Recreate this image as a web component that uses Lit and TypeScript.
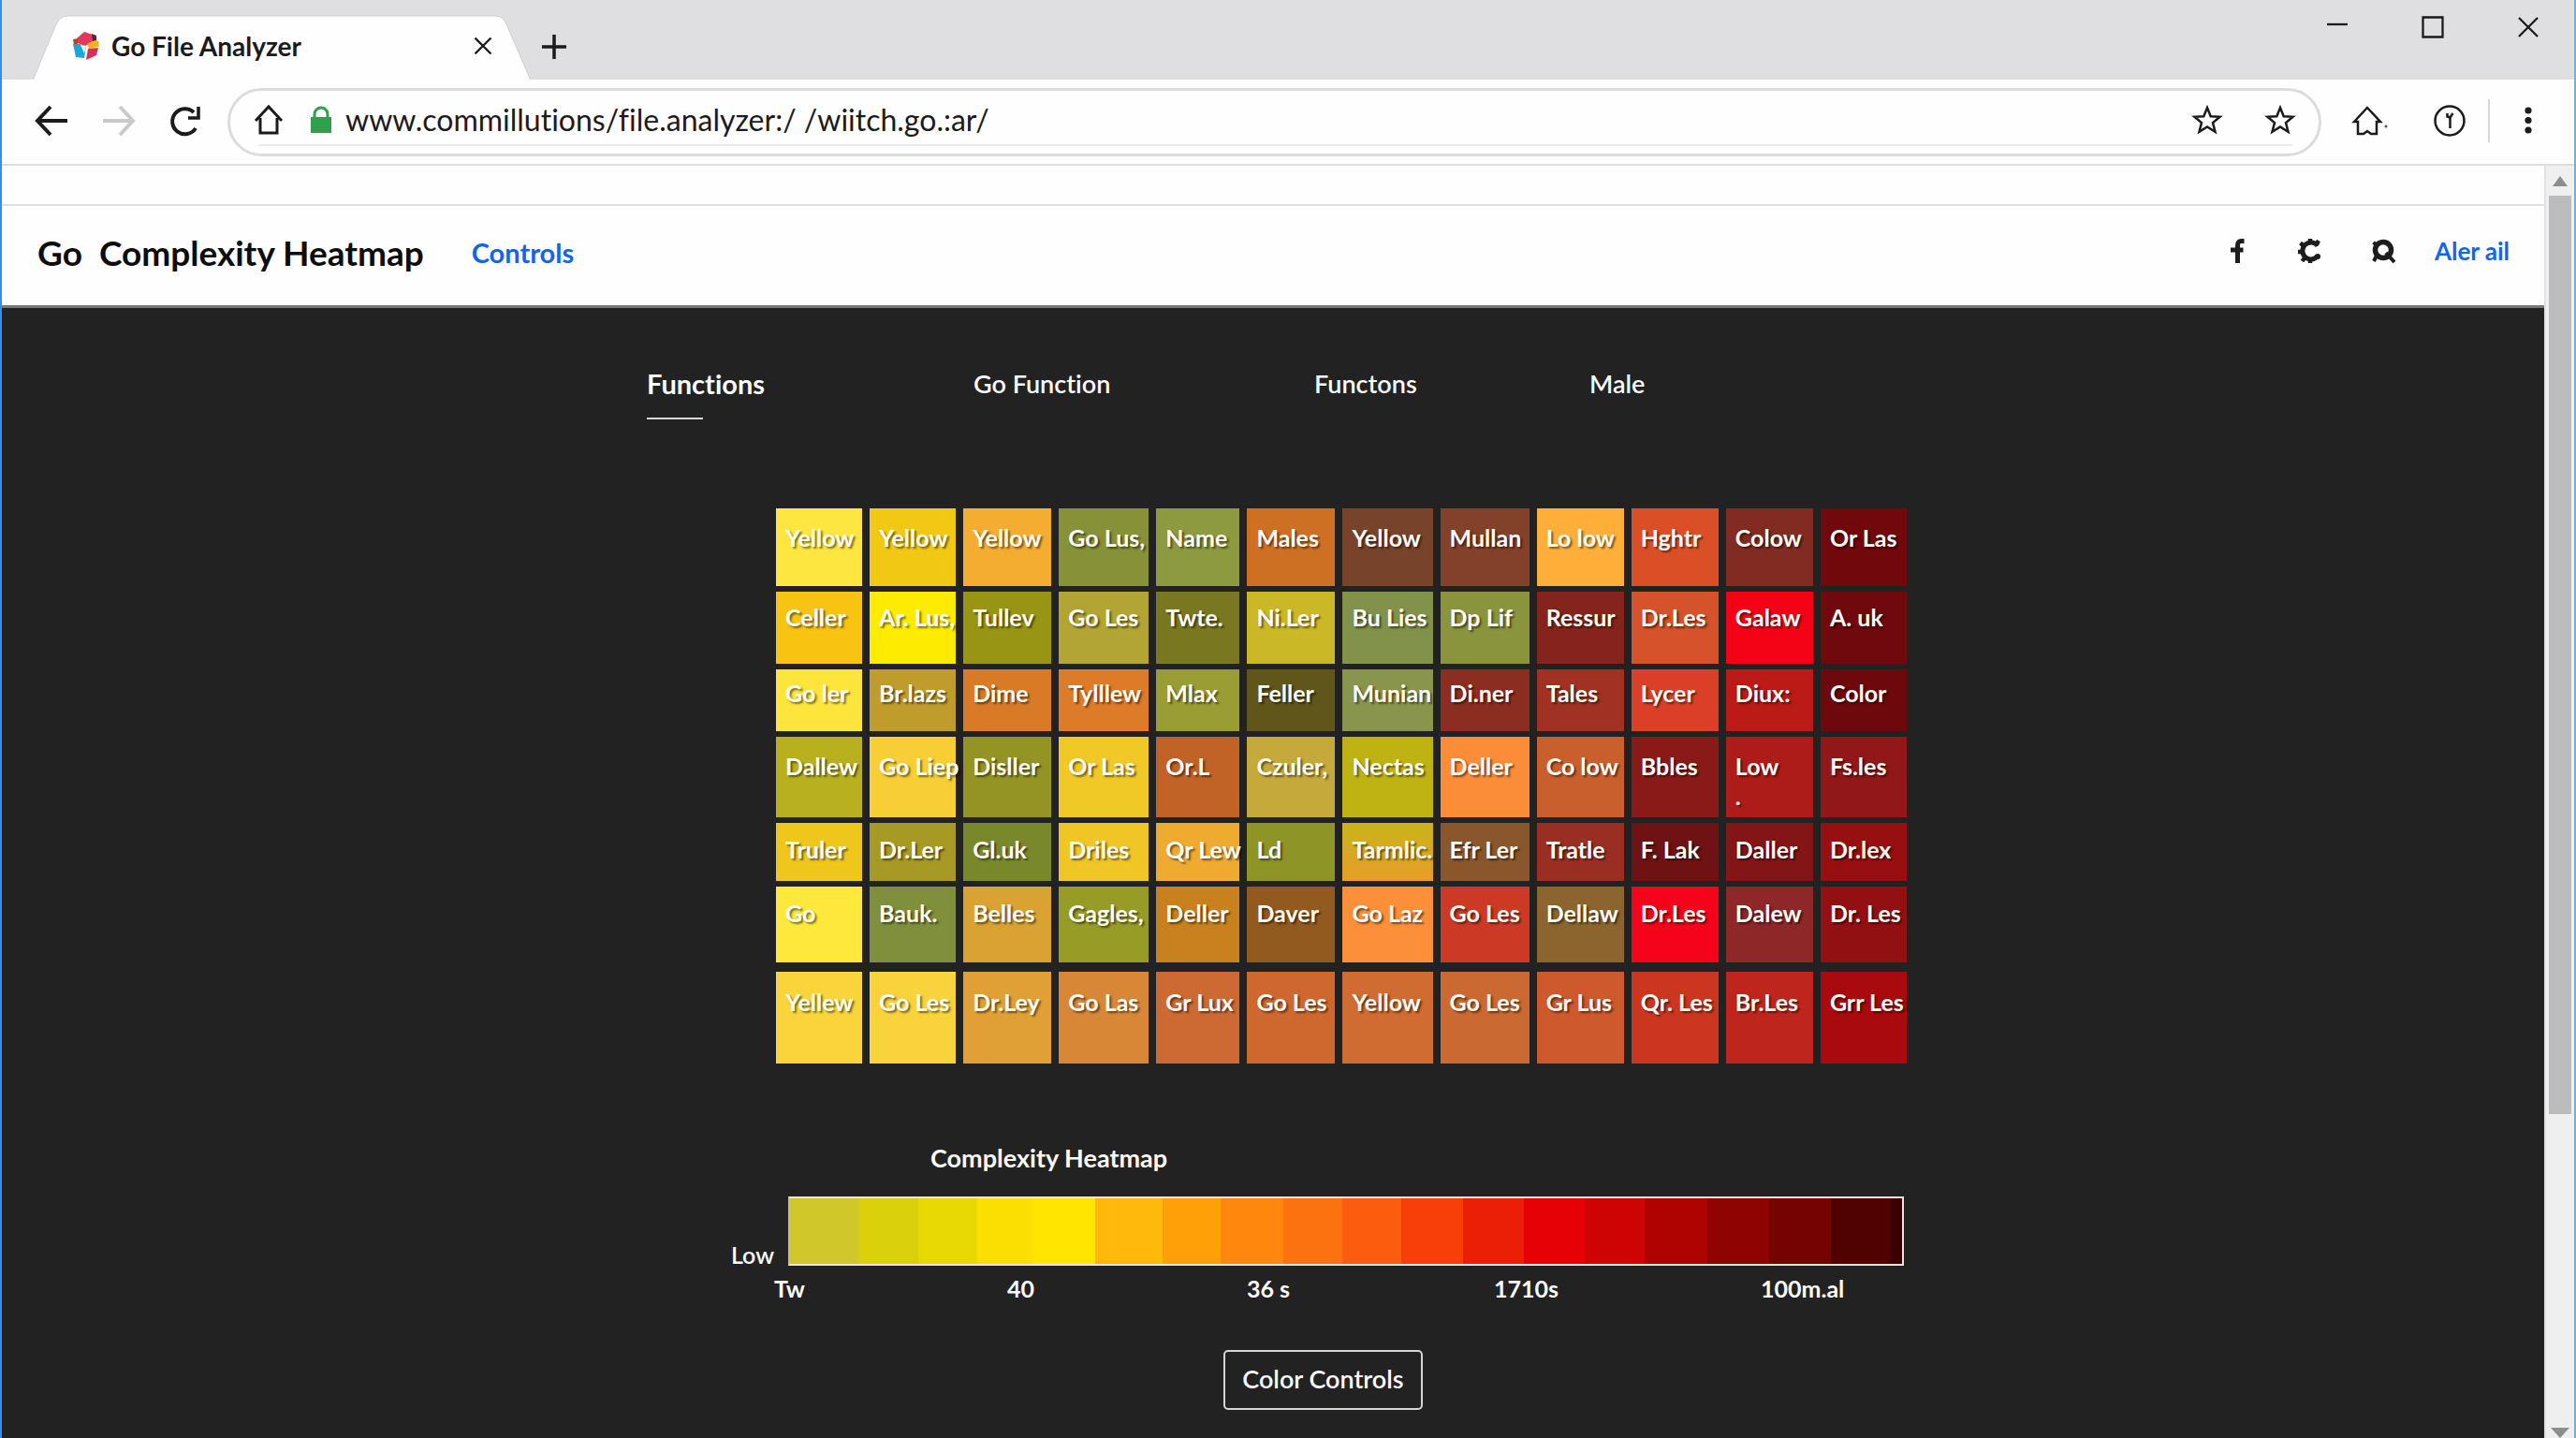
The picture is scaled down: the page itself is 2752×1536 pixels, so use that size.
import { LitElement, html, css, svg } from "lit";
import { customElement, property } from "lit/decorators.js";
import { styleMap } from "lit/directives/style-map.js";

type Cell = [label: string, color: string];
interface HeatRow {
  height: number;
  pad: number;
  cells: Cell[];
}

const HEAT_ROWS: HeatRow[] = [
  {
    height: 83,
    pad: 15,
    cells: [
      ["Yellow", "#fde63f"], ["Yellow", "#f1c914"], ["Yellow", "#f4ad31"], ["Go Lus,", "#879138"],
      ["Name", "#8e9a3f"], ["Males", "#ce7024"], ["Yellow", "#77432a"], ["Mullan", "#84412a"],
      ["Lo low", "#fdaf3a"], ["Hghtr", "#db4f27"], ["Colow", "#822b23"], ["Or Las", "#70080c"],
    ],
  },
  {
    height: 77,
    pad: 11,
    cells: [
      ["Celler", "#f7c412"], ["Ar. Lus,", "#fdec02"], ["Tullev", "#989414"], ["Go Les", "#b2a534"],
      ["Twte.", "#797720"], ["Ni.Ler", "#cab826"], ["Bu Lies", "#82924a"], ["Dp Lif", "#8a943c"],
      ["Ressur", "#84241c"], ["Dr.Les", "#d5522b"], ["Galaw", "#f40317"], ["A. uk", "#70090d"],
    ],
  },
  {
    height: 66,
    pad: 9,
    cells: [
      ["Go ler", "#fde53c"], ["Br.lazs", "#bf9c2c"], ["Dime", "#d97a27"], ["Tylllew", "#de7b28"],
      ["Mlax", "#9a9c34"], ["Feller", "#60561a"], ["Munian", "#89954c"], ["Di.ner", "#8c2d22"],
      ["Tales", "#a13223"], ["Lycer", "#dc3f27"], ["Diux:", "#bb1a17"], ["Color", "#6d090d"],
    ],
  },
  {
    height: 86,
    pad: 15,
    cells: [
      ["Dallew", "#b9b01f"], ["Go Liep", "#f7ce36"], ["Disller", "#939423"], ["Or Las", "#f0c927"],
      ["Or.L", "#c16327"], ["Czuler,", "#c6a93b"], ["Nectas", "#bfb213"], ["Deller", "#fc8d38"],
      ["Co low", "#ca5f2e"], ["Bbles", "#8a1a17"], ["Low\n.", "#ad1c18"], ["Fs.les", "#921718"],
    ],
  },
  {
    height: 62,
    pad: 12,
    cells: [
      ["Truler", "#eec61c"], ["Dr.Ler", "#a79a24"], ["Gl.uk", "#7a882c"], ["Driles", "#efc626"],
      ["Qr Lew", "#efaa30"], ["Ld", "#8e9425"], ["Tarmlic.", "linear-gradient(#c9b41c, #e79d29)"], ["Efr Ler", "#8a562c"],
      ["Tratle", "#9a2e23"], ["F. Lak", "#6e1214"], ["Daller", "#841517"], ["Dr.lex", "#980f12"],
    ],
  },
  {
    height: 81,
    pad: 12,
    cells: [
      ["Go", "#fde83b"], ["Bauk.", "#7f8f3c"], ["Belles", "#d9a232"], ["Gagles,", "#969c25"],
      ["Deller", "#c98120"], ["Daver", "#935a20"], ["Go Laz", "#fc8f3a"], ["Go Les", "#cc3a26"],
      ["Dellaw", "#8c652e"], ["Dr.Les", "#f4031b"], ["Dalew", "#8e2728"], ["Dr. Les", "#920f12"],
    ],
  },
  {
    height: 98,
    pad: 16,
    cells: [
      ["Yellew", "#f9d53b"], ["Go Les", "#f8d33b"], ["Dr.Ley", "#e1a036"], ["Go Las", "#d88737"],
      ["Gr Lux", "#cd6a34"], ["Go Les", "#cf682e"], ["Yellow", "#d06c31"], ["Go Les", "#ca6931"],
      ["Gr Lus", "#cd592d"], ["Qr. Les", "#cb3620"], ["Br.Les", "#be261d"], ["Grr Les", "#a80a0e"],
    ],
  },
];

/** Segments of the colour scale: relative width and fill. */
const SCALE: [number, string][] = [
  [73, "#d0c82a"], [64, "#dad00b"], [63, "#e8d905"], [59, "#fae002"], [67, "#ffe500"],
  [72, "#ffb90a"], [62, "#ffa009"], [67, "#ff870d"], [63, "#fc7110"], [64, "#fb5c0d"],
  [66, "#f73f07"], [65, "#ea1f05"], [65, "#e50105"], [64, "#ce0404"], [67, "#af0302"],
  [66, "#8f0402"], [66, "#740301"], [64, "#500200"], [12, "#3a0000"],
];

const ICONS = {
  back: svg`<path d="M35 17H3M17 2 3 17l14 15" stroke-width="4"/>`,
  forward: svg`<path d="M1 17h32M19 2l14 15-14 15" stroke-width="4"/>`,
  reload: svg`<path d="M28 25A13.500 13.500 0 1 1 26 8" stroke-width="4"/><path d="M31 2v12H20" stroke-width="3.500"/>`,
  home: svg`<path d="M3 18 17 3l14 15M8 15v16h18V15" stroke-width="3"/>`,
  homeWide: svg`<path d="M3 18 17 3l14 15h-4v13h-6l-4-3-4 3H7V18z" stroke-width="2.500"/><circle cx="37" cy="23" r="1" stroke-width="1"/>`,
  star: svg`<path d="m17 4 3.700 9.200 9.900.6-7.600 6.300 2.500 9.700L17 24.400 8.500 29.800 11 20.100 3.400 13.800l9.900-.6z" stroke-width="2.500" stroke-linejoin="miter"/>`,
  profile: svg`<circle cx="17" cy="17" r="15.500" stroke-width="2.500"/><path d="M14.500 9v3.500l3 1V25M17.500 13.500l3-4.500" stroke-width="2.500"/>`,
  menu: svg`<g fill="currentColor" stroke="none"><circle cx="17" cy="6" r="3.600"/><circle cx="17" cy="16.500" r="3.600"/><circle cx="17" cy="27" r="3.600"/></g>`,
  close: svg`<path d="M8.500 8.500l17 17M25.500 8.500l-17 17" stroke-width="2.300"/>`,
  plus: svg`<path d="M17 4v26M4 17h26" stroke-width="3.500"/>`,
  minimize: svg`<path d="M6 14h22" stroke-width="2.300"/>`,
  maximize: svg`<path d="M6.500 6.500h21v21h-21z" stroke-width="2.300"/>`,
  windowClose: svg`<path d="M7 7l20 20M27 7 7 27" stroke-width="2.300"/>`,
  facebook: svg`<path d="M24.500 6.500h-3c-3.500 0-4 2-4 5V30M10 16h13.500" stroke-width="5"/>`,
  gear: svg`<path d="M25 11.500A9 9 0 1 0 24.500 23" stroke-width="5"/><path d="M17 9V4M10.500 12 6.500 8.500M9 18H4M11.500 24l-3 4M17 25v5M23 11l3-5" stroke-width="4.500"/><circle cx="25" cy="23" r="3" fill="currentColor" stroke="none"/>`,
  search: svg`<circle cx="17" cy="16" r="8.500" stroke-width="5.500"/><path d="M20 19l9 10M10 22l-3 6M9 10 6.500 8" stroke-width="4"/>`,
  up: svg`<path d="M9 22 17 11l8 11z" fill="#8d8d8f" stroke="none"/>`,
  down: svg`<path d="M7 21h20l-10 11z" fill="#8d8d8f" stroke="none"/>`,
};

@customElement("ui-icon")
class UiIcon extends LitElement {
  @property() name: keyof typeof ICONS = "home";

  static styles = css`
    :host {
      display: block;
      flex: none;
      width: 34px;
      height: 34px;
    }
    .glyph {
      display: block;
      overflow: visible;
      fill: none;
      stroke: currentColor;
    }
  `;

  render() {
    return html`<svg class="glyph" width="34" height="34" viewBox="0 0 34 34" aria-hidden="true">
      ${ICONS[this.name]}
    </svg>`;
  }
}

@customElement("browser-chrome")
class BrowserChrome extends LitElement {
  static styles = css`
    :host {
      display: block;
      color: #1b1b1d;
    }
    button {
      display: block;
      padding: 0;
      border: 0;
      background: none;
      color: inherit;
      font: inherit;
    }
    .strip {
      display: flex;
      height: 85px;
      background: #dfdfe1;
      padding-left: 33px;
    }
    .tab {
      position: relative;
      display: flex;
      align-items: center;
      width: 532px;
      height: 69px;
      margin-top: 16px;
      box-sizing: border-box;
      padding: 0 34px 4px 40px;
    }
    .tab-shape {
      position: absolute;
      inset: 0;
      fill: #fefefe;
      stroke: #cfcfd2;
    }
    .favicon {
      position: relative;
      flex: none;
    }
    .tab-title {
      position: relative;
      flex: 1;
      margin-left: 12px;
      font-size: 28px;
      font-weight: 700;
      line-height: 32px;
      white-space: nowrap;
    }
    .tab-close {
      position: relative;
    }
    .new-tab {
      align-self: center;
      margin: 14px 0 0 8px;
    }
    .window {
      display: flex;
      gap: 68px;
      margin: 12px 32px 0 auto;
      height: 34px;
    }
    .toolbar {
      display: flex;
      align-items: center;
      height: 90px;
      background: #fefefe;
      border-bottom: 2px solid #dedee0;
      padding: 0 32px 0 35px;
    }
    .nav {
      display: flex;
      gap: 38px;
      padding-bottom: 2px;
    }
    .off {
      color: #c9c9cb;
    }
    .address {
      position: relative;
      display: flex;
      flex: 1;
      align-items: center;
      height: 73px;
      margin: 0 32px 0 28px;
      box-sizing: border-box;
      border: 3px solid #dcdcde;
      border-radius: 37px;
      padding: 0 24px 4px 24px;
    }
    .address::after {
      content: "";
      position: absolute;
      left: 30px;
      right: 28px;
      bottom: 8px;
      height: 2px;
      background: #ececee;
    }
    .lock {
      flex: none;
      margin-left: 27px;
    }
    .url {
      flex: 1;
      min-width: 0;
      margin: 0 20px 0 14px;
      padding: 0;
      border: 0;
      outline: 0;
      background: none;
      color: #1b1b1d;
      font: 400 32px/40px var(--face);
      font-variant-ligatures: none;
    }
    .stars {
      display: flex;
      gap: 44px;
    }
    .extras {
      display: flex;
      align-items: center;
      gap: 54px;
      padding-bottom: 2px;
    }
    .more {
      display: flex;
      align-items: center;
      height: 46px;
      margin-left: -30px;
      border-left: 2px solid #d8d8da;
      padding-left: 24px;
    }
  `;

  render() {
    return html`
      <div class="strip">
        <div class="tab">
          <svg class="tab-shape" width="532" height="69" viewBox="0 0 532 69" aria-hidden="true">
            <path d="M0 70 L25 10 Q29 1 38 1 H494 Q503 1 506 10 L532 70" />
          </svg>
          <svg class="favicon" width="32" height="32" viewBox="0 0 32 32" aria-hidden="true">
            <path d="M7 8 15 1l9 3 1 7-9 5-8-3z" fill="#e8355f" />
            <path d="M3 9l5-1v6l-4 1z" fill="#b8431f" />
            <path d="M3 14l7 0 7 2-2 13-9-1z" fill="#1aa6d6" />
            <path d="M18 14l9-5 4 3-1 5-10 2z" fill="#efb21b" />
            <path d="M19 19l11-1-2 8-11 5z" fill="#d62f5c" />
            <path d="M23 3l5 2v5l-4 1z" fill="#3e2f52" />
            <path d="M11 15l6 1-2 8z" fill="#f9f3e0" />
          </svg>
          <span class="tab-title">Go File Analyzer</span>
          <button class="tab-close" aria-label="Close tab"><ui-icon name="close"></ui-icon></button>
        </div>
        <button class="new-tab" aria-label="New tab"><ui-icon name="plus"></ui-icon></button>
        <div class="window">
          <button aria-label="Minimize"><ui-icon name="minimize"></ui-icon></button>
          <button aria-label="Maximize"><ui-icon name="maximize"></ui-icon></button>
          <button aria-label="Close window"><ui-icon name="windowClose"></ui-icon></button>
        </div>
      </div>
      <div class="toolbar">
        <div class="nav">
          <button aria-label="Back"><ui-icon name="back"></ui-icon></button>
          <button class="off" aria-label="Forward"><ui-icon name="forward"></ui-icon></button>
          <button aria-label="Reload"><ui-icon name="reload"></ui-icon></button>
        </div>
        <div class="address">
          <button aria-label="Home"><ui-icon name="home"></ui-icon></button>
          <svg class="lock" width="24" height="30" viewBox="0 0 24 30" aria-hidden="true">
            <path d="M5 14V9a7 7 0 0 1 14 0v5" fill="none" stroke="#2fa14c" stroke-width="3" />
            <path d="M1 12h22v17H1z" fill="#2fa14c" />
          </svg>
          <input class="url" aria-label="Address" value="www.commillutions/file.analyzer:/ /wiitch.go.:ar/" />
          <div class="stars">
            <button aria-label="Bookmark"><ui-icon name="star"></ui-icon></button>
            <button aria-label="Favorites"><ui-icon name="star"></ui-icon></button>
          </div>
        </div>
        <div class="extras">
          <button aria-label="Start page"><ui-icon name="homeWide"></ui-icon></button>
          <button aria-label="Profile"><ui-icon name="profile"></ui-icon></button>
          <div class="more">
            <button aria-label="Menu"><ui-icon name="menu"></ui-icon></button>
          </div>
        </div>
      </div>
    `;
  }
}

@customElement("heat-grid")
class HeatGrid extends LitElement {
  static styles = css`
    :host {
      display: flex;
      flex-direction: column;
      gap: 6px;
    }
    .row {
      display: grid;
      grid-template-columns: 92fr 92fr 94fr 96fr 89fr 94fr 96fr 95fr 93fr 93fr 93fr 92fr;
      column-gap: 8px;
    }
    .row:last-child {
      margin-top: 4px;
    }
    .cell {
      min-width: 0;
      box-sizing: border-box;
      padding-left: 10px;
      color: #fffdf6;
      font-size: 25px;
      font-weight: 700;
      line-height: 32px;
      white-space: pre;
      text-shadow: 2px 2px 2px rgba(0, 0, 0, 0.5);
    }
  `;

  render() {
    return HEAT_ROWS.map(
      (row) => html`<div class="row">
        ${row.cells.map(
          ([label, color]) =>
            html`<div class="cell" style=${styleMap({ background: color, height: `${row.height}px`, paddingTop: `${row.pad}px` })}>${label}</div>`
        )}
      </div>`
    );
  }
}

@customElement("app-root")
class AppRoot extends LitElement {
  static styles = css`
    :host {
      --face: Lato, "Noto Sans", sans-serif;
      display: flex;
      flex-direction: column;
      min-height: 100vh;
      box-sizing: border-box;
      border-left: 2px solid #3b8be0;
      border-right: 2px solid #6fb3cf;
      background: #fefefe;
      font-family: var(--face);
      font-variant-ligatures: none;
    }
    .body {
      display: flex;
      flex: 1;
    }
    .page {
      display: flex;
      flex: 1;
      flex-direction: column;
      min-width: 0;
    }
    .band {
      height: 41px;
      border-bottom: 2px solid #e0e0e2;
    }
    .header {
      display: flex;
      align-items: center;
      height: 100px;
      border-bottom: 3px solid #77777a;
      padding: 0 37px 6px 38px;
    }
    .title {
      margin: 0 51px 0 0;
      color: #0d0d0f;
      font-size: 37px;
      font-weight: 700;
      line-height: 42px;
      white-space: pre;
    }
    .link {
      color: #0f66ee;
      font-size: 29px;
      font-weight: 700;
      line-height: 32px;
      text-decoration: none;
      white-space: nowrap;
    }
    .social {
      display: flex;
      align-items: center;
      gap: 44px;
      margin-left: auto;
      padding-bottom: 4px;
      color: #1d1d1f;
    }
    .social a {
      color: inherit;
    }
    .social .link {
      margin-left: -6px;
      color: #0f66ee;
      font-size: 26px;
    }
    .main {
      flex: 1;
      background: #222222;
      color: #fbfbfb;
      padding-bottom: 30px;
    }
    .tabs {
      display: grid;
      grid-template-columns: 689fr 349fr 364fr 294fr 1020fr;
      padding-top: 63px;
    }
    .tab {
      justify-self: start;
      color: inherit;
      font-size: 27px;
      font-weight: 600;
      line-height: 36px;
      text-decoration: none;
      white-space: nowrap;
    }
    .tab:first-child {
      grid-column: 2;
    }
    .tab.current {
      font-size: 29px;
      font-weight: 700;
    }
    .tab.current::after {
      content: "";
      display: block;
      width: 60px;
      height: 2px;
      margin-top: 18px;
      background: #dcd6da;
    }
    .stage {
      display: grid;
      grid-template-columns: 827fr 1208fr 681fr;
      margin-top: 95px;
    }
    .stage heat-grid {
      grid-column: 2;
      min-width: 0;
    }
    .legend-title {
      display: grid;
      grid-template-columns: 992fr 1724fr;
      margin: 85px 0 0;
      font-size: 27px;
      font-weight: 700;
      line-height: 32px;
    }
    .legend-title span {
      grid-column: 2;
    }
    .scale {
      display: grid;
      grid-template-columns: 825fr 15fr 1192fr 684fr;
      margin-top: 25px;
    }
    .low {
      grid-column: 1;
      align-self: end;
      justify-self: end;
      font-size: 25px;
      font-weight: 600;
      line-height: 24px;
    }
    .bar {
      grid-column: 3;
      display: flex;
      height: 74px;
      box-sizing: border-box;
      border: 2px solid #f0e4e0;
      border-left-color: #bdbbb0;
    }
    .ticks {
      display: grid;
      grid-template-columns: 825fr 249fr 256fr 264fr 285fr 837fr;
      margin-top: 8px;
      font-size: 25px;
      font-weight: 700;
      line-height: 32px;
    }
    .ticks span:first-child {
      grid-column: 2;
    }
    .actions {
      display: grid;
      grid-template-columns: 1307fr auto 1200fr;
      margin-top: 50px;
    }
    .action {
      grid-column: 2;
      height: 64px;
      box-sizing: border-box;
      border: 2px solid #d6d6d6;
      border-radius: 5px;
      padding: 0 18px 2px;
      background: none;
      color: inherit;
      font: 600 27px/36px var(--face);
    }
    .scrollbar {
      display: flex;
      flex: none;
      flex-direction: column;
      align-items: center;
      width: 30px;
      background: #efeff0;
      border-left: 2px solid #e2e2e4;
    }
    .thumb {
      flex: 980;
      width: 24px;
      background: #bcbcbe;
    }
    .rest {
      flex: 314;
    }
    .arrow {
      width: 34px;
      height: 32px;
    }
  `;

  render() {
    return html`
      <browser-chrome></browser-chrome>
      <div class="body">
        <div class="page">
          <div class="band"></div>
          <header class="header">
            <h1 class="title">Go  Complexity Heatmap</h1>
            <a class="link" href="#controls">Controls</a>
            <nav class="social">
              <a href="#facebook" aria-label="Facebook"><ui-icon name="facebook"></ui-icon></a>
              <a href="#settings" aria-label="Settings"><ui-icon name="gear"></ui-icon></a>
              <a href="#search" aria-label="Search"><ui-icon name="search"></ui-icon></a>
              <a class="link" href="#all">Aler ail</a>
            </nav>
          </header>
          <main class="main">
            <nav class="tabs">
              <a class="tab current" href="#functions">Functions</a>
              <a class="tab" href="#go-function">Go Function</a>
              <a class="tab" href="#functons">Functons</a>
              <a class="tab" href="#male">Male</a>
            </nav>
            <div class="stage"><heat-grid></heat-grid></div>
            <h2 class="legend-title"><span>Complexity Heatmap</span></h2>
            <div class="scale">
              <span class="low">Low</span>
              <div class="bar">
                ${SCALE.map(([weight, color]) => html`<i style=${styleMap({ flex: String(weight), background: color })}></i>`)}
              </div>
            </div>
            <div class="ticks">
              <span>Tw</span><span>40</span><span>36 s</span><span>1710s</span><span>100m.al</span>
            </div>
            <div class="actions"><button class="action">Color Controls</button></div>
          </main>
        </div>
        <div class="scrollbar">
          <ui-icon class="arrow" name="up"></ui-icon>
          <div class="thumb"></div>
          <div class="rest"></div>
          <ui-icon class="arrow" name="down"></ui-icon>
        </div>
      </div>
    `;
  }
}
